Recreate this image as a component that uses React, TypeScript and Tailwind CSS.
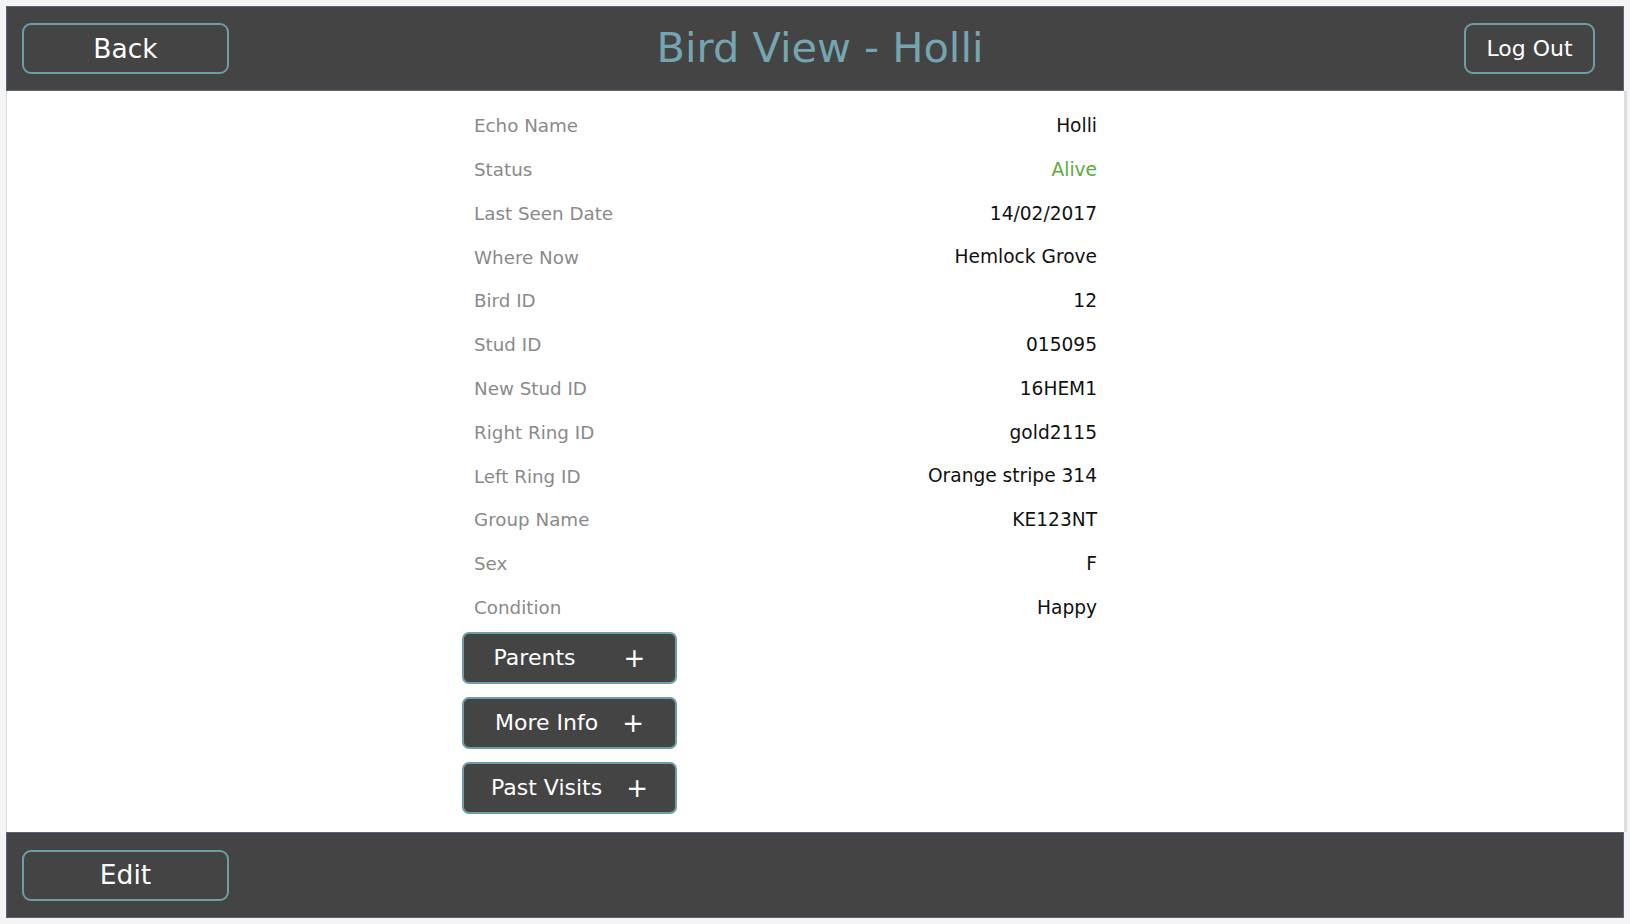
import React from "react";

const font = { fontFamily: '"DejaVu Sans", Verdana, sans-serif' };

type Row = { label: string; value: string; green?: boolean };

const rows: Row[] = [
  { label: "Echo Name", value: "Holli" },
  { label: "Status", value: "Alive", green: true },
  { label: "Last Seen Date", value: "14/02/2017" },
  { label: "Where Now", value: "Hemlock Grove" },
  { label: "Bird ID", value: "12" },
  { label: "Stud ID", value: "015095" },
  { label: "New Stud ID", value: "16HEM1" },
  { label: "Right Ring ID", value: "gold2115" },
  { label: "Left Ring ID", value: "Orange stripe 314" },
  { label: "Group Name", value: "KE123NT" },
  { label: "Sex", value: "F" },
  { label: "Condition", value: "Happy" },
];

function BarButton({ label, wide }: { label: string; wide?: boolean }) {
  return (
    <button
      className={`h-[51px] ${wide ? "w-[207px] text-[26.5px]" : "w-[131px] text-[22px]"} rounded-[9px] border-2 border-[#6c9ea8] bg-[#444444] text-white`}
    >
      {label}
    </button>
  );
}

function ToggleButton({ label, minW }: { label: string; minW?: string }) {
  return (
    <button className="flex h-[52px] w-[215px] items-center justify-center gap-[24px] rounded-[7px] border-2 border-[#6c9ea8] bg-[#444444] text-[22px] text-white">
      <span className={`text-left ${minW ?? ""}`}>{label}</span>
      <span className="text-[26px] leading-none">+</span>
    </button>
  );
}

export default function App() {
  return (
    <div className="min-h-screen bg-[#f4f4f4] pl-[6px] pt-[6px]" style={font}>
      <div className="flex h-[912px] w-[1621px] flex-col">
        <header className="grid h-[85px] w-[1618px] grid-cols-[1fr_auto_1fr] items-center border border-[#56657a] bg-[#444444] px-[15px]">
          <div>
            <BarButton label="Back" wide />
          </div>
          <h1 className="ml-[10px] text-[41.5px] text-[#74a6b1]">Bird View - Holli</h1>
          <div className="flex justify-end pr-[13px]">
            <BarButton label="Log Out" />
          </div>
        </header>

        <main className="flex-1 border-l border-r-[3px] border-l-[#dddddd] border-r-[#dcdcdc] bg-white pt-[13px]">
          <div className="ml-[455px] w-[635px]">
            {rows.map((r) => (
              <div key={r.label} className="flex h-[43.8px] items-center justify-between pl-[12px]">
                <span className="text-[18.3px] text-[#8a8a8a]">{r.label}</span>
                <span className={`text-[18.6px] ${r.green ? "text-[#5cab3c]" : "text-[#111111]"}`}>{r.value}</span>
              </div>
            ))}
            <div className="mt-[2px] flex flex-col gap-[13px]">
              <ToggleButton label="Parents" minW="min-w-[106px]" />
              <ToggleButton label="More Info" />
              <ToggleButton label="Past Visits" />
            </div>
          </div>
        </main>

        <footer className="flex h-[86px] w-[1618px] items-center border border-[#56657a] bg-[#444444] px-[15px]">
          <BarButton label="Edit" wide />
        </footer>
      </div>
    </div>
  );
}
